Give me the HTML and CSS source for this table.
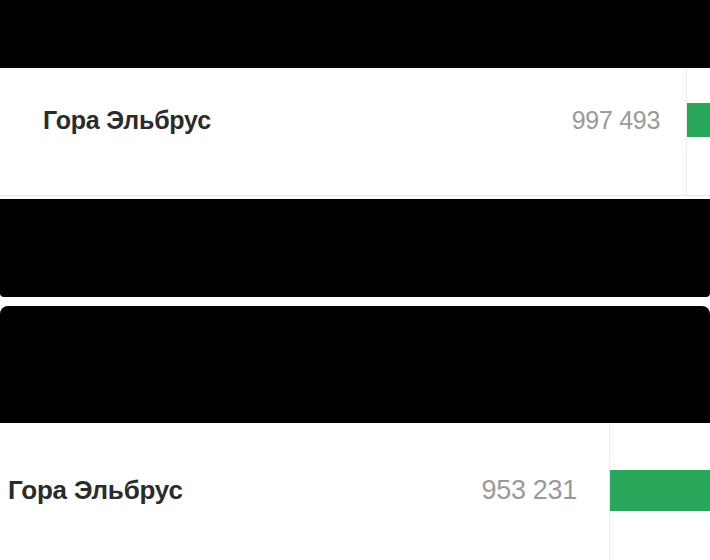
FILE: index.html
```
<!DOCTYPE html>
<html lang="ru">
<head>
    <meta charset="UTF-8">
    <meta name="viewport" content="width=device-width, initial-scale=1.0">
    <title>Гора Эльбрус</title>
    <link rel="stylesheet" href="styles.css">
</head>
<body>

    <div class="hidden-bar top"></div>

    <!-- first screenshot row -->
    <div class="row first">
        <div class="row-label">
            <span class="name">Гора Эльбрус</span>
            <span class="votes">997 493</span>
        </div>
        <div class="row-bar">
            <div class="bar"></div>
        </div>
    </div>

    <div class="hidden-bar middle"></div>
    <div class="hidden-bar lower"></div>

    <!-- second screenshot row -->
    <div class="row second">
        <div class="row-label">
            <span class="name">Гора Эльбрус</span>
            <span class="votes">953 231</span>
        </div>
        <div class="row-bar">
            <div class="bar"></div>
        </div>
    </div>

</body>
</html>
```
FILE: styles.css
```
body {
    font-family: 'Liberation Sans', Arial, sans-serif;
    margin: 0;
    padding: 0;
    background-color: #fff;
    overflow: hidden;
}

.hidden-bar {
    background-color: #000;
}

.top {
    height: 68px;
}

.middle {
    height: 98px;
    margin-top: 3px;
    border-radius: 0 0 4px 4px;
}

.lower {
    height: 117px;
    margin-top: 9px;
    border-radius: 8px 8px 0 0;
}

.row {
    display: flex;
}

.row-label {
    flex: 1;
    display: flex;
    align-items: center;
    justify-content: space-between;
}

.name {
    font-weight: bold;
    color: #2b2b2b;
    letter-spacing: -0.2px;
}

.votes {
    color: #9a9a9a;
    letter-spacing: -0.3px;
}

.row-bar {
    border-left: 1px solid #ececec;
}

.bar {
    background-color: #28a65a;
}

/* upper row */
.first {
    height: 127px;
    border-bottom: 1px solid #e8e8e8;
}

.first .row-label {
    height: 34px;
    margin-top: 35px;
    padding: 0 26px 0 43px;
}

.first .name {
    font-size: 25px;
}

.first .votes {
    font-size: 25px;
}

.first .row-bar {
    width: 23px;
    padding-top: 35px;
}

.first .bar {
    height: 34px;
}

/* lower row */
.second {
    height: 137px;
}

.second .row-label {
    height: 41px;
    margin-top: 47px;
    padding: 0 32px 0 8px;
}

.second .name {
    font-size: 26px;
}

.second .votes {
    font-size: 27px;
}

.second .row-bar {
    width: 100px;
    padding-top: 47px;
}

.second .bar {
    height: 41px;
}
```
